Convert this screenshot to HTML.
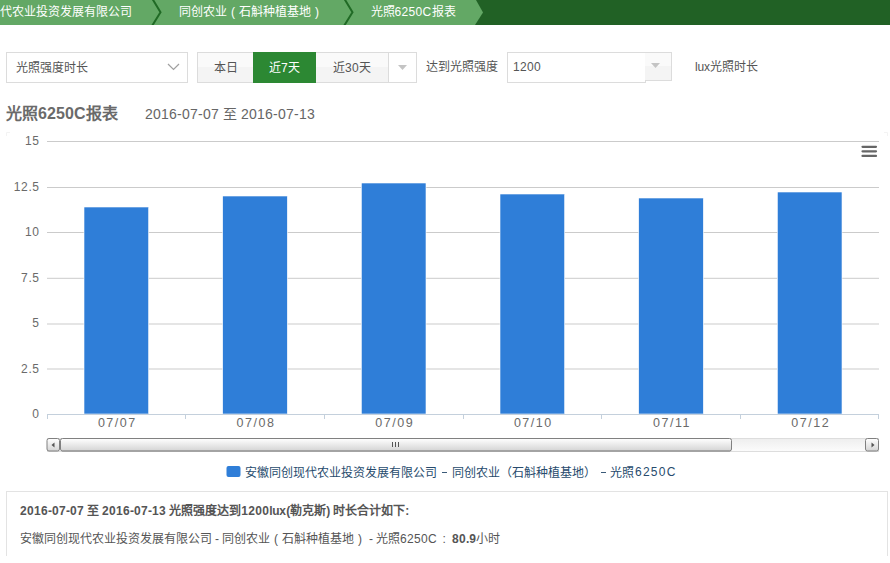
<!DOCTYPE html>
<html lang="zh-CN">
<head>
<meta charset="utf-8">
<style>
*{margin:0;padding:0;box-sizing:border-box}
html,body{width:890px;height:563px;overflow:hidden;background:#fff}
body{font-family:"Liberation Sans",sans-serif;font-size:12px;color:#555;position:relative}
.abs{position:absolute;white-space:nowrap}
#bc{position:absolute;left:0;top:0;width:890px;height:25px;background:#216125;overflow:hidden}
#bc svg{position:absolute;left:0;top:0}
.bct{position:absolute;top:0;height:25px;line-height:25px;color:#fff;font-size:12px;white-space:nowrap}
.box{position:absolute;border:1px solid #dcdcdc;background:#fff}
.btn{position:absolute;top:52px;height:31px;border:1px solid #dcdcdc;background:linear-gradient(#fafafa 50%,#f4f4f4 50%);color:#555;text-align:center;line-height:31px}
.lbl{position:absolute;line-height:14px;white-space:nowrap}
.cp{display:inline-block;width:12px;text-align:center}
</style>
</head>
<body>
<div id="bc">
  <svg width="890" height="25">
    <polygon points="0,0 476,0 483,12.5 475,25 0,25" fill="#63a865"/>
    <polyline points="152.5,-1 160.5,12.2 152,26" fill="none" stroke="#206a25" stroke-width="2"/>
    <polyline points="344.5,-1 352.5,12.2 344,26" fill="none" stroke="#206a25" stroke-width="2"/>
  </svg>
  <div class="bct" style="left:-0.5px">代农业投资发展有限公司</div>
  <div class="bct" style="left:179px">同创农业<span class="cp">(</span>石斛种植基地<span class="cp">)</span></div>
  <div class="bct" style="left:370.5px">光照<span style="letter-spacing:0.33px">6250</span><span style="letter-spacing:0.33px">C</span>报表</div>
</div>

<div class="box" style="left:6px;top:52px;width:182px;height:31px"></div>
<div class="lbl" style="left:16px;top:61px">光照强度时长</div>
<svg class="abs" style="left:166px;top:62px" width="16" height="10"><polyline points="2,2 7.5,7.5 13,2" fill="none" stroke="#a0a0a0" stroke-width="1.2"/></svg>

<div class="btn" style="left:197px;width:57px">本日</div>
<div class="btn" style="left:253px;width:63px;background:#2c8833;border-color:#2c8833;color:#fff">近<span style="letter-spacing:0.33px">7</span>天</div>
<div class="btn" style="left:316px;width:73px;border-left:none">近<span style="letter-spacing:0.33px">30</span>天</div>
<div class="btn" style="left:388px;width:29px;background:#fff"></div>
<svg class="abs" style="left:397px;top:64px" width="12" height="8"><polygon points="1,1 10,1 5.5,6" fill="#c4c4c4"/></svg>

<div class="lbl" style="left:426px;top:60px">达到光照强度</div>
<div class="box" style="left:507px;top:52px;width:139px;height:31px"></div>
<div class="lbl" style="left:513px;top:60px"><span style="letter-spacing:0.33px">1200</span></div>
<div class="btn" style="left:645px;width:27px;height:29px;border-left:none"></div>
<svg class="abs" style="left:646px;top:63px" width="16" height="7"><polygon points="5,0 14,0 9.5,5" fill="#c4c4c4"/></svg>
<div class="lbl" style="left:695px;top:60px"><span style="letter-spacing:-0.2px">lux</span>光照时长</div>

<div class="abs" style="left:6px;top:104px;font-size:16px;font-weight:bold;color:#6a6a6a;line-height:20px">光照<span style="letter-spacing:0.10px">6250</span><span style="letter-spacing:0.45px">C</span>报表</div>
<div class="abs" style="left:145px;top:105px;font-size:14px;color:#666;line-height:18px"><span style="letter-spacing:0.21px">2016</span><span style="letter-spacing:0.34px">-</span><span style="letter-spacing:0.21px">07</span><span style="letter-spacing:0.34px">-</span><span style="letter-spacing:0.21px">07</span><span style="letter-spacing:0.11px"> </span>至<span style="letter-spacing:0.11px"> </span><span style="letter-spacing:0.21px">2016</span><span style="letter-spacing:0.34px">-</span><span style="letter-spacing:0.21px">07</span><span style="letter-spacing:0.34px">-</span><span style="letter-spacing:0.21px">13</span></div>

<svg class="abs" style="left:0;top:0" width="890" height="563">
<defs><linearGradient id="gb" x1="0" y1="0" x2="0" y2="1"><stop offset="0" stop-color="#fff"/><stop offset="1" stop-color="#d4d4d4"/></linearGradient><linearGradient id="gt" x1="0" y1="0" x2="0" y2="1"><stop offset="0" stop-color="#eee"/><stop offset="1" stop-color="#fcfcfc"/></linearGradient></defs>
<path d="M6.5,136 V132.5 H10" fill="none" stroke="#f3f3f3" stroke-width="1"/>
<path d="M884,132.5 H887.5 V136" fill="none" stroke="#f3f3f3" stroke-width="1"/>
<line x1="47" y1="141.5" x2="879" y2="141.5" stroke="#cbcbcb" stroke-width="1" shape-rendering="geometricPrecision"/>
<line x1="47" y1="187.5" x2="879" y2="187.5" stroke="#cbcbcb" stroke-width="1" shape-rendering="geometricPrecision"/>
<line x1="47" y1="232.5" x2="879" y2="232.5" stroke="#cbcbcb" stroke-width="1" shape-rendering="geometricPrecision"/>
<line x1="47" y1="278.3" x2="879" y2="278.3" stroke="#cbcbcb" stroke-width="1" shape-rendering="geometricPrecision"/>
<line x1="47" y1="324.0" x2="879" y2="324.0" stroke="#cbcbcb" stroke-width="1" shape-rendering="geometricPrecision"/>
<line x1="47" y1="369.0" x2="879" y2="369.0" stroke="#cbcbcb" stroke-width="1" shape-rendering="geometricPrecision"/>
<rect x="84.00" y="207" width="64.67" height="207" fill="#2f7ed8" stroke="#fff" stroke-width="0.6"/>
<rect x="222.67" y="196" width="64.67" height="218" fill="#2f7ed8" stroke="#fff" stroke-width="0.6"/>
<rect x="361.33" y="183" width="64.67" height="231" fill="#2f7ed8" stroke="#fff" stroke-width="0.6"/>
<rect x="500.00" y="194" width="64.67" height="220" fill="#2f7ed8" stroke="#fff" stroke-width="0.6"/>
<rect x="638.67" y="198" width="64.67" height="216" fill="#2f7ed8" stroke="#fff" stroke-width="0.6"/>
<rect x="777.34" y="192" width="64.67" height="222" fill="#2f7ed8" stroke="#fff" stroke-width="0.6"/>
<line x1="47" y1="414.5" x2="879" y2="414.5" stroke="#c4d0dc" stroke-width="1"/>
<line x1="47.5" y1="414" x2="47.5" y2="419" stroke="#c4d0dc" stroke-width="1"/>
<line x1="185.5" y1="414" x2="185.5" y2="419" stroke="#c4d0dc" stroke-width="1"/>
<line x1="324.5" y1="414" x2="324.5" y2="419" stroke="#c4d0dc" stroke-width="1"/>
<line x1="463.5" y1="414" x2="463.5" y2="419" stroke="#c4d0dc" stroke-width="1"/>
<line x1="601.5" y1="414" x2="601.5" y2="419" stroke="#c4d0dc" stroke-width="1"/>
<line x1="740.5" y1="414" x2="740.5" y2="419" stroke="#c4d0dc" stroke-width="1"/>
<line x1="878.5" y1="414" x2="878.5" y2="419" stroke="#c4d0dc" stroke-width="1"/>
<text x="39.6" y="144.8" text-anchor="end" font-size="12" fill="#6a6a6a" letter-spacing="0.6">15</text>
<text x="39.6" y="190.8" text-anchor="end" font-size="12" fill="#6a6a6a" letter-spacing="0.6">12.5</text>
<text x="39.6" y="235.8" text-anchor="end" font-size="12" fill="#6a6a6a" letter-spacing="0.6">10</text>
<text x="39.6" y="281.8" text-anchor="end" font-size="12" fill="#6a6a6a" letter-spacing="0.6">7.5</text>
<text x="39.6" y="326.8" text-anchor="end" font-size="12" fill="#6a6a6a" letter-spacing="0.6">5</text>
<text x="39.6" y="372.8" text-anchor="end" font-size="12" fill="#6a6a6a" letter-spacing="0.6">2.5</text>
<text x="39.6" y="417.8" text-anchor="end" font-size="12" fill="#6a6a6a" letter-spacing="0.6">0</text>
<text x="117.3" y="427" text-anchor="middle" font-size="12.5" fill="#6a6a6a" letter-spacing="1.5">07/07</text>
<text x="256.0" y="427" text-anchor="middle" font-size="12.5" fill="#6a6a6a" letter-spacing="1.5">07/08</text>
<text x="394.7" y="427" text-anchor="middle" font-size="12.5" fill="#6a6a6a" letter-spacing="1.5">07/09</text>
<text x="533.3" y="427" text-anchor="middle" font-size="12.5" fill="#6a6a6a" letter-spacing="1.5">07/10</text>
<text x="672.0" y="427" text-anchor="middle" font-size="12.5" fill="#6a6a6a" letter-spacing="1.5">07/11</text>
<text x="810.7" y="427" text-anchor="middle" font-size="12.5" fill="#6a6a6a" letter-spacing="1.5">07/12</text>
<line x1="862.5" y1="146.8" x2="876" y2="146.8" stroke="#666" stroke-width="2.2" stroke-linecap="round"/>
<line x1="862.5" y1="151.3" x2="876" y2="151.3" stroke="#666" stroke-width="2.2" stroke-linecap="round"/>
<line x1="862.5" y1="155.9" x2="876" y2="155.9" stroke="#666" stroke-width="2.2" stroke-linecap="round"/>
<rect x="47.5" y="438.5" width="831" height="13" fill="url(#gt)" stroke="#ddd" stroke-width="1"/>
<rect x="60.5" y="438.5" width="671" height="12.5" rx="2" fill="url(#gb)" stroke="#808080" stroke-width="1"/>
<line x1="62" y1="451" x2="730" y2="451" stroke="#9a9a9a" stroke-width="1"/>
<line x1="392.5" y1="442" x2="392.5" y2="447" stroke="#555" stroke-width="1"/>
<line x1="395.5" y1="442" x2="395.5" y2="447" stroke="#555" stroke-width="1"/>
<line x1="398.5" y1="442" x2="398.5" y2="447" stroke="#555" stroke-width="1"/>
<rect x="47" y="438.5" width="12.5" height="12.5" rx="2" fill="url(#gb)" stroke="#808080" stroke-width="1"/>
<polygon points="51.5,445 54.5,442.5 54.5,447.5" fill="#555"/>
<rect x="865.5" y="438.5" width="13" height="12.5" rx="2" fill="url(#gb)" stroke="#808080" stroke-width="1"/>
<polygon points="874.5,445 871.5,442.5 871.5,447.5" fill="#555"/>
<rect x="226.5" y="466" width="14" height="11" rx="2" fill="#2f7ed8"/>
</svg>
<div class="abs" style="left:245px;top:465.5px;font-size:12px;color:#274b6d;line-height:14px">安徽同创现代农业投资发展有限公司</div>
<div class="abs" style="left:441.6px;top:472px;width:5.6px;height:1px;background:#3a5a78"></div>
<div class="abs" style="left:452px;top:465.5px;font-size:12px;color:#274b6d;line-height:14px">同创农业（石斛种植基地）</div>
<div class="abs" style="left:600.5px;top:472px;width:5.6px;height:1px;background:#3a5a78"></div>
<div class="abs" style="left:610px;top:465.5px;font-size:12px;color:#274b6d;line-height:14px">光照</div>
<div class="abs" style="left:635px;top:464.5px;font-size:12px;color:#274b6d;line-height:14px;letter-spacing:1.25px">6250C</div>

<div class="abs" style="left:6px;top:491px;width:882px;height:65px;border:1px solid #e3e3e3;border-bottom:none"></div>
<div class="abs" style="left:20px;top:504px;font-weight:bold;color:#555;line-height:14px"><span style="letter-spacing:0.33px">2016</span>-<span style="letter-spacing:0.33px">07</span>-<span style="letter-spacing:0.33px">07</span><span style="letter-spacing:-0.33px"> </span>至<span style="letter-spacing:-0.33px"> </span><span style="letter-spacing:0.33px">2016</span>-<span style="letter-spacing:0.33px">07</span>-<span style="letter-spacing:0.33px">13</span><span style="letter-spacing:-0.33px"> </span>光照强度达到<span style="letter-spacing:0.33px">1200</span><span style="letter-spacing:-0.33px">l</span><span style="letter-spacing:-0.33px">u</span><span style="letter-spacing:0.33px">x</span>(勒克斯)<span style="letter-spacing:-0.33px"> </span>时长合计如下:</div>
<div class="abs" style="left:20px;top:531.5px;color:#555;line-height:14px">安徽同创现代农业投资发展有限公司<span style="letter-spacing:-0.33px"> </span>-<span style="letter-spacing:-0.33px"> </span>同创农业<span class="cp">(</span>石斛种植基地<span class="cp">)</span><span style="letter-spacing:-0.33px"> </span>-<span style="letter-spacing:-0.33px"> </span>光照<span style="letter-spacing:0.33px">6250</span><span style="letter-spacing:0.33px">C</span><span style="letter-spacing:-0.33px"> </span><span class="cp" style="position:relative;left:-2px">:</span><b><span style="letter-spacing:0.33px">80</span><span style="letter-spacing:-0.33px">.</span><span style="letter-spacing:0.33px">9</span></b>小时</div>
</body>
</html>
